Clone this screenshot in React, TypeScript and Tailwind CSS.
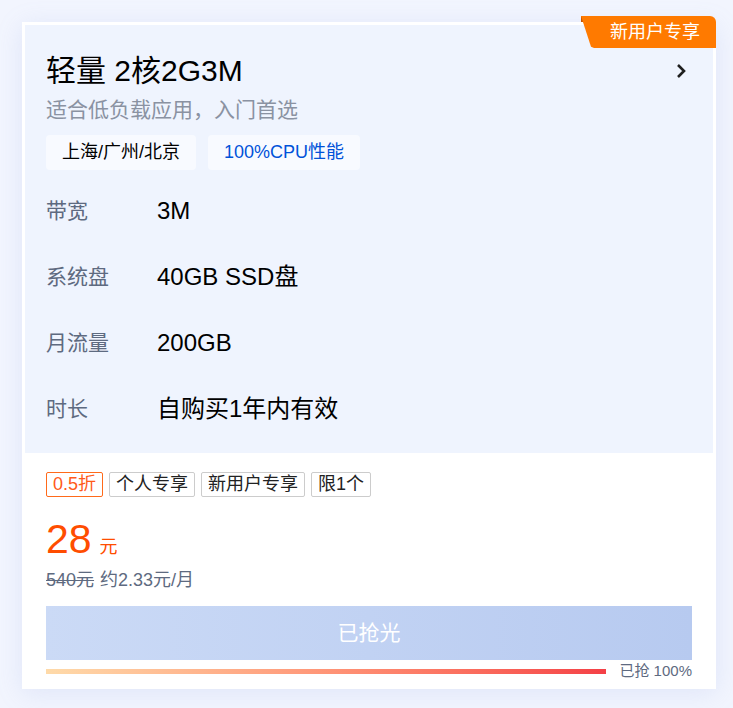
import React from 'react';

const font = { fontFamily: '"Liberation Sans", "Noto Sans CJK SC", sans-serif' };

interface Spec {
  label: string;
  value: string;
}

const specs: Spec[] = [
  { label: '带宽', value: '3M' },
  { label: '系统盘', value: '40GB SSD盘' },
  { label: '月流量', value: '200GB' },
  { label: '时长', value: '自购买1年内有效' },
];

const perks = ['个人专享', '新用户专享', '限1个'];

const Chevron = () => (
  <svg width="14" height="16" viewBox="0 0 14 16" className="text-[#1f1f1f]">
    <polyline points="4,2 10,8 4,14" fill="none" stroke="currentColor" strokeWidth="2.6" strokeLinejoin="miter" />
  </svg>
);

const NewUserBadge = () => (
  <div className="absolute right-0 top-[-6px] h-8 w-[135px]">
    <div className="absolute left-0 top-0 h-[6px] w-[4px] bg-[#c45400]" />
    <div
      className="absolute inset-0 rounded-tr-[6px] bg-[#ff7a00]"
      style={{ clipPath: 'polygon(0 0, 100% 0, 100% 100%, 13px 100%, 10px 96%)' }}
    />
    <span className="relative flex h-full items-center justify-end pr-[16px] text-[18px] text-white">新用户专享</span>
  </div>
);

const App: React.FC = () => {
  return (
    <div style={font} className="min-h-[708px] bg-[#f2f5fe] p-[22px]">
      <div className="relative w-[694px] bg-white p-[3px] shadow-[0_4px_24px_rgba(140,160,220,0.18)]">
        <NewUserBadge />

        {/* Plan header and spec rows */}
        <div className="bg-[#eff4fe] px-[21px] pb-[11px] pt-[29px]">
          <div className="flex items-center justify-between">
            <h1 className="text-[30px] leading-[34px] text-black">轻量 2核2G3M</h1>
            <div className="mr-[4px]">
              <Chevron />
            </div>
          </div>
          <p className="mt-[9px] text-[21px] leading-[26px] text-[#8a92a2]">适合低负载应用，入门首选</p>
          <div className="mt-[12px] flex gap-[12px]">
            <span className="flex h-[35px] items-center rounded-[4px] bg-[#f8faff] px-[16px] text-[18px] text-black">
              上海/广州/北京
            </span>
            <span className="flex h-[35px] items-center rounded-[4px] bg-[#f8faff] px-[16px] text-[18px] text-[#0052d9]">
              100%CPU性能
            </span>
          </div>
          <div className="mt-[8px]">
            {specs.map((s) => (
              <div key={s.label} className="flex h-[66px] items-center">
                <span className="w-[111px] text-[21px] text-[#5e6a80]">{s.label}</span>
                <span className="text-[24px] text-black">{s.value}</span>
              </div>
            ))}
          </div>
        </div>

        {/* Price and purchase area */}
        <div className="px-[21px] pb-[4px] pt-[19px]">
          <div className="flex gap-[6px]">
            <span className="flex h-[25px] items-center rounded-[2px] border border-[#ff6a1a] px-[6px] text-[18px] text-[#ff5a1a]">
              0.5折
            </span>
            {perks.map((p) => (
              <span
                key={p}
                className="flex h-[25px] items-center rounded-[2px] border border-[#cccccc] px-[6px] text-[18px] text-[#222]"
              >
                {p}
              </span>
            ))}
          </div>
          <div className="mt-[18px] flex items-baseline">
            <span className="text-[41px] leading-[48px] text-[#ff4d00]">28</span>
            <span className="ml-[8px] text-[18px] text-[#ff4d00]">元</span>
          </div>
          <div className="mt-[5px] flex gap-[6px] text-[18px] leading-[24px] text-[#5e6a80]">
            <span className="line-through">540元</span>
            <span>约2.33元/月</span>
          </div>
          <button className="mt-[14px] flex h-[54px] w-full items-center justify-center bg-gradient-to-r from-[#cbdaf6] to-[#b7caf0] text-[21px] text-white">
            已抢光
          </button>
          <div className="flex items-center gap-[13px]">
            <div className="h-[5px] flex-1 bg-gradient-to-r from-[#fedaa9] to-[#f43f46]" />
            <span className="text-[15px] leading-[22px] text-[#5e6a80]">已抢 100%</span>
          </div>
        </div>
      </div>
    </div>
  );
};

export default App;
